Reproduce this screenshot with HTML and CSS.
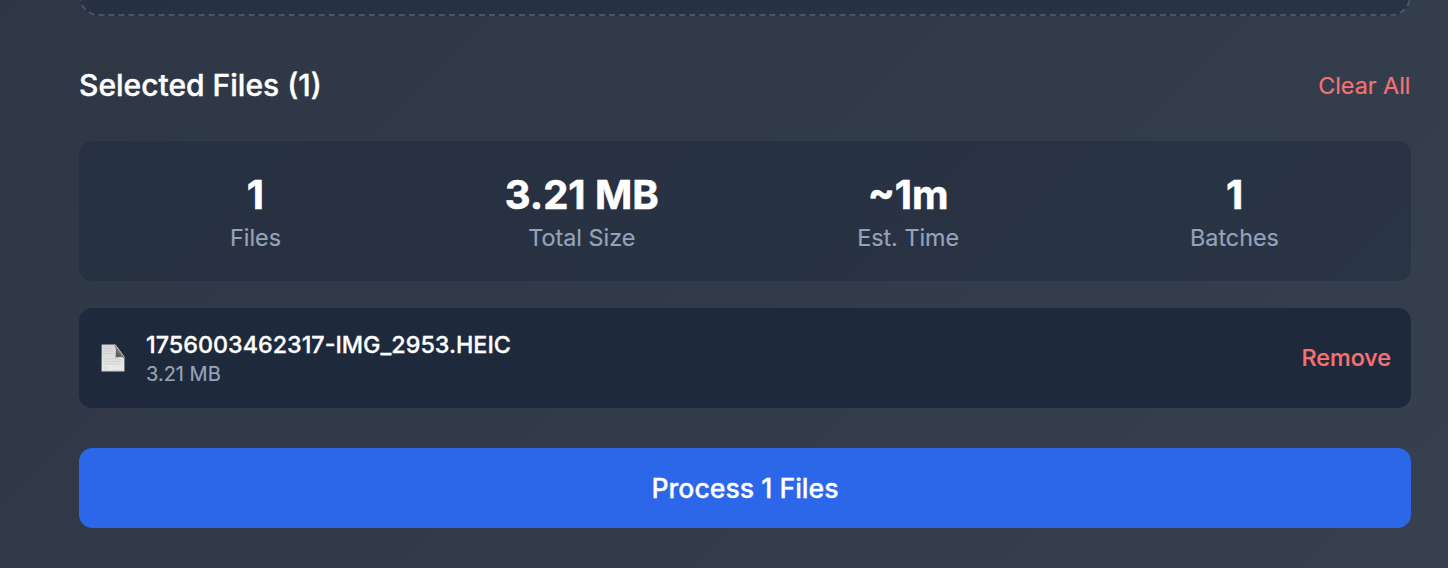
FILE: index.html
```
<!DOCTYPE html>
<html lang="en">
<head>
<meta charset="utf-8">
<title>Selected Files</title>
<link rel="stylesheet" href="styles.css">
</head>
<body>
<main class="panel">
  <div class="dropzone"></div>
  <header class="header">
    <h2 class="title">Selected Files (1)</h2>
    <button class="clear" type="button">Clear All</button>
  </header>
  <section class="stats">
    <div class="stat"><div class="value">1</div><div class="label">Files</div></div>
    <div class="stat"><div class="value">3.21 MB</div><div class="label">Total Size</div></div>
    <div class="stat"><div class="value">~1m</div><div class="label">Est. Time</div></div>
    <div class="stat"><div class="value">1</div><div class="label">Batches</div></div>
  </section>
  <section class="file">
    <svg class="file-icon" viewBox="0 0 24 28" aria-hidden="true">
      <defs>
        <linearGradient id="paper" x1="0" y1="0" x2="0" y2="1"><stop offset="0" stop-color="#d4d4d4"/><stop offset="1" stop-color="#ebebeb"/></linearGradient>
        <linearGradient id="fold" x1="0" y1="1" x2="1" y2="0"><stop offset="0" stop-color="#c4c4c4"/><stop offset=".3" stop-color="#555"/><stop offset=".5" stop-color="#777"/><stop offset=".62" stop-color="#f4f4f4"/></linearGradient>
      </defs>
      <path d="M.6 .5H13.500C17 4 20 8 23.400 13.500V27.300H.6Z" fill="url(#paper)"/>
      <path d="M.6 27H23.400" stroke="#b4b4b4" stroke-width=".8"/>
      <path d="M3 4.500H12M3 7H12M3 9.500H13M3 15H20M3 17.500H20M3 20H18M3 24H8" stroke="#cacaca" stroke-width=".7"/>
      <path d="M12.500 .5C15.500 3 15.500 9 14 14C18 12.600 21 12.600 23.400 14.500V12.500L14.500 .5Z" fill="url(#fold)"/>
    </svg>
    <div class="file-info">
      <div class="file-name">1756003462317-IMG_2953.HEIC</div>
      <div class="file-size">3.21 MB</div>
    </div>
    <button class="remove" type="button">Remove</button>
  </section>
  <button class="process" type="button">Process 1 Files</button>
</main>
</body>
</html>
```
FILE: styles.css
```
* { box-sizing: border-box; }
body {
  margin: 0;
  height: 568px;
  overflow: hidden;
  font-family: Inter, "Liberation Sans", sans-serif;
  color: #fff;
  background: linear-gradient(135deg, #2f3745 0%, #313a49 45%, #37404f 100%);
}
button {
  margin: 0;
  padding: 0;
  border: 0;
  background: none;
  font: inherit;
}
.panel { display: flow-root; padding: 0 37px 0 79px; }
.dropzone {
  height: 56px;
  margin-top: -40px;
  border: 2px dashed #475569;
  border-radius: 20px;
  background: rgba(30, 41, 59, .5);
}
.header {
  display: flex;
  justify-content: space-between;
  align-items: center;
  height: 47px;
  margin: 46px 0 32px;
}
.title {
  margin: 0;
  font-size: 30px;
  font-weight: 500;
  line-height: 47px;
  -webkit-text-stroke: .4px currentColor;
}
.clear {
  margin-right: .5px;
  color: #f87171;
  font-size: 23.333px;
  line-height: 33.333px;
  -webkit-text-stroke: .2px currentColor;
}
.stats {
  display: grid;
  grid-template-columns: repeat(4, 1fr);
  gap: 26.667px;
  height: 140px;
  padding: 26.667px;
  border-radius: 13.333px;
  background: rgba(30, 41, 59, .5);
  text-align: center;
}
.value {
  font-size: 40px;
  font-weight: 700;
  line-height: 53.333px;
  -webkit-text-stroke: .6px currentColor;
}
.label {
  color: #94a3b8;
  font-size: 23.333px;
  line-height: 33.333px;
  -webkit-text-stroke: .2px currentColor;
}
.file {
  display: flex;
  align-items: center;
  height: 100px;
  margin-top: 27px;
  padding: 20px;
  border-radius: 13.333px;
  background: #1e293b;
}
.file-icon { width: 24px; height: 28px; margin: 0 21.500px 1px 1.500px; }
.file-info { flex: 1; }
.file-name {
  font-size: 23.333px;
  font-weight: 500;
  line-height: 33.333px;
  -webkit-text-stroke: .3px currentColor;
}
.file-size {
  color: #94a3b8;
  font-size: 20px;
  line-height: 26.667px;
  -webkit-text-stroke: .2px currentColor;
}
.remove {
  color: #f87171;
  font-size: 23.333px;
  font-weight: 500;
  line-height: 33.333px;
  -webkit-text-stroke: .2px currentColor;
}
.process {
  display: block;
  width: 100%;
  height: 80px;
  margin-top: 40px;
  border-radius: 13.333px;
  background: #2b67e8;
  color: #fff;
  font-size: 26.667px;
  font-weight: 500;
  -webkit-text-stroke: .3px currentColor;
}
```
